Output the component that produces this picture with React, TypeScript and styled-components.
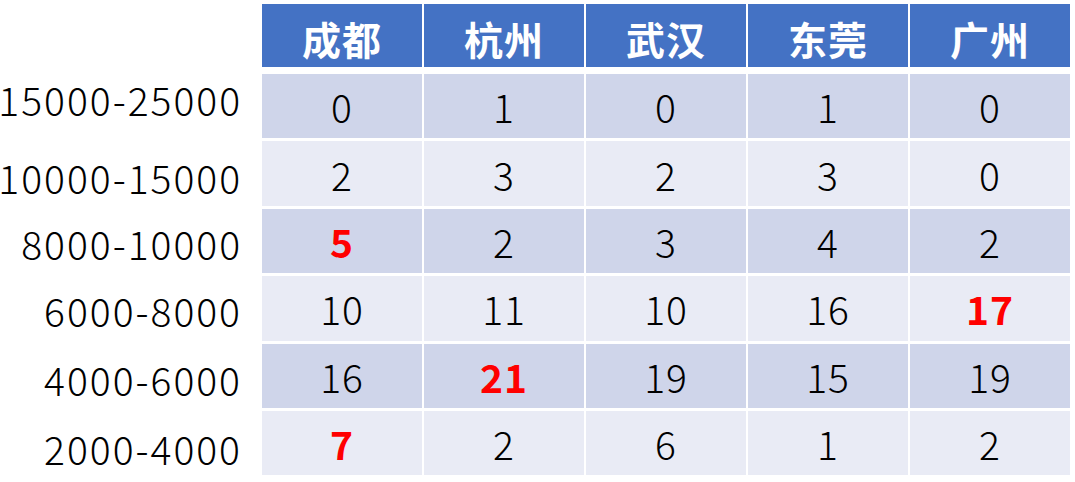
import React from 'react';
import styled, { createGlobalStyle } from 'styled-components';

const GlobalStyle = createGlobalStyle`
  html, body {
    margin: 0;
    padding: 0;
    background: #fff;
  }
  body {
    font-family: "Noto Sans CJK SC", "Liberation Sans", sans-serif;
  }
`;

const Page = styled.div`
  display: flex;
  width: 1075px;
  height: 482px;
  padding-top: 4px;
  box-sizing: border-box;
`;

const Labels = styled.div`
  width: 262px;
  padding-right: 20px;
  box-sizing: border-box;
  display: flex;
  flex-direction: column;
  align-items: flex-end;
`;

const Label = styled.div<{ $top: number }>`
  margin-top: ${p => p.$top}px;
  height: 40px;
  line-height: 40px;
  font-size: 39px;
  font-weight: 300;
  letter-spacing: 2px;
  color: #000;
  white-space: nowrap;
`;

const Table = styled.div`
  display: grid;
  grid-template-columns: repeat(5, 160px);
  grid-template-rows: 67px repeat(6, 64.4px);
  column-gap: 2px;
  row-gap: 3px;
`;

const HeadCell = styled.div`
  background: #4472c4;
  color: #fff;
  font-size: 39px;
  font-weight: 700;
  display: flex;
  align-items: center;
  justify-content: center;
  padding-top: 5px;
  box-sizing: border-box;
  margin-bottom: 4px;
  letter-spacing: 1px;
`;

const Cell = styled.div<{ $odd: boolean; $hot: boolean }>`
  background: ${p => (p.$odd ? '#cfd5ea' : '#e9ebf5')};
  color: ${p => (p.$hot ? '#ff0000' : '#000')};
  font-size: 39px;
  font-weight: ${p => (p.$hot ? 700 : 300)};
  letter-spacing: 1px;
  display: flex;
  align-items: center;
  justify-content: center;
`;

const cities = ['成都', '杭州', '武汉', '东莞', '广州'];

const rows: { label: string; top: number; values: (number | string)[]; hot: number[] }[] = [
  { label: '15000-25000', top: 74.5, values: [0, 1, 0, 1, 0], hot: [] },
  { label: '10000-15000', top: 38, values: [2, 3, 2, 3, 0], hot: [] },
  { label: '8000-10000', top: 26.5, values: [5, 2, 3, 4, 2], hot: [0] },
  { label: '6000-8000', top: 26.5, values: [10, 11, 10, 16, 17], hot: [4] },
  { label: '4000-6000', top: 29.5, values: [16, 21, 19, 15, 19], hot: [1] },
  { label: '2000-4000', top: 29, values: [7, 2, 6, 1, 2], hot: [0] },
];

export default function App() {
  return (
    <>
      <GlobalStyle />
      <Page>
        <Labels>
          {rows.map(r => (
            <Label key={r.label} $top={r.top}>{r.label}</Label>
          ))}
        </Labels>
        <Table>
          {cities.map(c => (
            <HeadCell key={c}>{c}</HeadCell>
          ))}
          {rows.map((r, i) =>
            r.values.map((v, j) => (
              <Cell key={`${i}-${j}`} $odd={i % 2 === 0} $hot={r.hot.includes(j)}>
                {v}
              </Cell>
            ))
          )}
        </Table>
      </Page>
    </>
  );
}
